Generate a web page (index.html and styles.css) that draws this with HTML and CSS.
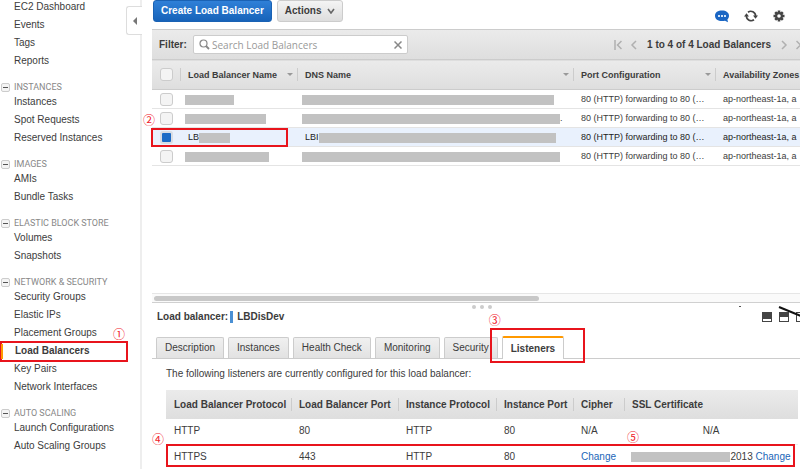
FILE: index.html
```html
<!DOCTYPE html>
<html lang="en">
<head>
    <meta charset="UTF-8">
    <meta name="viewport" content="width=device-width, initial-scale=1.0">
    <title>EC2 Management Console</title>
    <link rel="stylesheet" href="styles.css">
</head>
<body>
    <div class="console">
        <nav class="sidebar">
            <ul>
                <li><a href="#">EC2 Dashboard</a></li>
                <li><a href="#">Events</a></li>
                <li><a href="#">Tags</a></li>
                <li><a href="#">Reports</a></li>
            </ul>
            <h2><button class="fold" aria-label="Collapse"></button>INSTANCES</h2>
            <ul>
                <li><a href="#">Instances</a></li>
                <li><a href="#">Spot Requests</a></li>
                <li><a href="#">Reserved Instances</a></li>
            </ul>
            <h2><button class="fold" aria-label="Collapse"></button>IMAGES</h2>
            <ul>
                <li><a href="#">AMIs</a></li>
                <li><a href="#">Bundle Tasks</a></li>
            </ul>
            <h2><button class="fold" aria-label="Collapse"></button>ELASTIC BLOCK STORE</h2>
            <ul>
                <li><a href="#">Volumes</a></li>
                <li><a href="#">Snapshots</a></li>
            </ul>
            <h2><button class="fold" aria-label="Collapse"></button>NETWORK &amp; SECURITY</h2>
            <ul>
                <li><a href="#">Security Groups</a></li>
                <li><a href="#">Elastic IPs</a></li>
                <li><a href="#">Placement Groups</a></li>
                <li class="current"><a href="#">Load Balancers</a><span class="mark mark-nav"></span><span class="step step-1">①</span></li>
                <li><a href="#">Key Pairs</a></li>
                <li><a href="#">Network Interfaces</a></li>
            </ul>
            <h2><button class="fold" aria-label="Collapse"></button>AUTO SCALING</h2>
            <ul>
                <li><a href="#">Launch Configurations</a></li>
                <li><a href="#">Auto Scaling Groups</a></li>
            </ul>
            <button class="collapse" aria-label="Hide navigation">
                <svg width="4" height="8" viewBox="0 0 4 8"><path d="M4 0v8L0 4z" fill="#777"/></svg>
            </button>
        </nav>

        <main class="main">
            <div class="toolbar">
                <button class="btn btn-primary">Create Load Balancer</button>
                <button class="btn">Actions
                    <svg width="8" height="6" viewBox="0 0 8 6"><path d="M1 1l3 4 3-4" fill="none" stroke="#666" stroke-width="1.6"/></svg>
                </button>
                <div class="tools">
                    <svg width="14" height="14" viewBox="0 0 14 14">
                        <path d="M7 1.500c4 0 7 2 7 5.200 0 1.600-.6 2.800-1.600 3.700l.6 2.800-3-1.400c-.9.2-1.900.3-3 .3-4 0-7-2.100-7-5.400S3 1.500 7 1.500z" fill="#1a66c4"/>
                        <path d="M3 6h2v2H3zM6 6h2v2H6zM9 6h2v2H9z" fill="#cfe2f7"/>
                    </svg>
                    <svg width="14" height="14" viewBox="0 0 14 14">
                        <path d="M4 3.200A4.800 4.800 0 0 1 11.600 7M10 10.800A4.800 4.800 0 0 1 2.400 7" fill="none" stroke="#444" stroke-width="1.700"/>
                        <path d="M9 6.500h5l-2.500 3.200zM0 7.500h5L2.500 4.300z" fill="#444"/>
                    </svg>
                    <svg width="12" height="14" viewBox="0 0 12 14">
                        <g stroke="#444" stroke-width="2.600"><path d="M6 1.500v11M.5 7h11M2.200 3.200l7.600 7.600M9.800 3.200l-7.600 7.600"/></g>
                        <circle cx="6" cy="7" r="3.900" fill="#444"/>
                        <circle cx="6" cy="7" r="1.800" fill="#fff"/>
                    </svg>
                </div>
            </div>

            <div class="filter">
                <label for="search">Filter:</label>
                <div class="search">
                    <svg width="11" height="11" viewBox="0 0 11 11"><circle cx="4.500" cy="4.500" r="3.500" fill="none" stroke="#888" stroke-width="1.200"/><path d="M7 7l3 3" stroke="#888" stroke-width="1.800"/></svg>
                    <input id="search" type="text" placeholder="Search Load Balancers">
                    <button aria-label="Clear"><svg width="8" height="8" viewBox="0 0 8 8"><path d="M.5.5l7 7M7.500.5l-7 7" stroke="#888" stroke-width="1.500"/></svg></button>
                </div>
                <div class="pager">
                    <svg width="8" height="10" viewBox="0 0 8 10"><path d="M1 0v10M7.500 1l-4 4 4 4" /></svg>
                    <svg width="8" height="10" viewBox="0 0 8 10"><path d="M6 1L2 5l4 4"/></svg>
                    <strong>1 to 4 of 4 Load Balancers</strong>
                    <svg width="8" height="10" viewBox="0 0 8 10"><path d="M2 1l4 4-4 4"/></svg>
                    <svg width="8" height="10" viewBox="0 0 8 10"><path d="M.5 1l4 4-4 4M7 0v10"/></svg>
                </div>
            </div>

            <div class="grid-area">
                <table class="grid">
                    <colgroup><col class="c-check"><col class="c-name"><col><col class="c-port"><col class="c-zone"></colgroup>
                    <thead>
                        <tr>
                            <th><input type="checkbox" aria-label="Select all"></th>
                            <th><div class="th">Load Balancer Name <i></i></div></th>
                            <th><div class="th">DNS Name <i></i></div></th>
                            <th><div class="th">Port Configuration <i></i></div></th>
                            <th><div class="th">Availability Zones</div></th>
                        </tr>
                    </thead>
                    <tbody>
                        <tr>
                            <td><input type="checkbox" aria-label="Select row 1"></td>
                            <td class="masked"><span class="mask name-1"></span></td>
                            <td class="masked"><span class="mask dns-1"></span></td>
                            <td>80 (HTTP) forwarding to 80 (…</td>
                            <td>ap-northeast-1a, a</td>
                        </tr>
                        <tr>
                            <td><input type="checkbox" aria-label="Select row 2"></td>
                            <td class="masked"><span class="mask name-2"></span></td>
                            <td class="masked"><span class="mask dns-2"></span>.</td>
                            <td>80 (HTTP) forwarding to 80 (…</td>
                            <td>ap-northeast-1a, a</td>
                        </tr>
                        <tr class="selected">
                            <td><input type="checkbox" aria-label="Select row 3" checked><span class="mark mark-row"></span><span class="step step-2">②</span></td>
                            <td>LB<span class="mask name-3"></span></td>
                            <td>LBI<span class="mask dns-3"></span></td>
                            <td>80 (HTTP) forwarding to 80 (…</td>
                            <td>ap-northeast-1a, a</td>
                        </tr>
                        <tr>
                            <td><input type="checkbox" aria-label="Select row 4"></td>
                            <td class="masked"><span class="mask name-4"></span></td>
                            <td class="masked"><span class="mask dns-4"></span></td>
                            <td>80 (HTTP) forwarding to 80 (…</td>
                            <td>ap-northeast-1a, a</td>
                        </tr>
                    </tbody>
                </table>
            </div>
            <div class="scrollbar"><div class="thumb"></div></div>

            <section class="details">
                <div class="handle"><i></i><i></i><i></i></div>
                <div class="details-head">
                    <strong>Load balancer:</strong><span class="stripe"></span><strong>LBDisDev</strong>
                    <svg class="layouts" width="82" height="18" viewBox="-22 0 82 18">
                        <path d="M-21 0h2v1h-2z" fill="#555"/>
                        <path d="M2 6h10v10H2zM19 6h10v10H19zM36 6h10v10H36z" fill="#444"/>
                        <path d="M3 13h8v2H3zM20 11h8v4h-8zM37 7h8v8h-8z" fill="#fff"/>
                        <path d="M19 1l27 11" stroke="#111" stroke-width="2"/>
                    </svg>
                </div>
                <div class="tabs">
                    <button>Description</button>
                    <button>Instances</button>
                    <button>Health Check</button>
                    <button>Monitoring</button>
                    <button>Security</button>
                    <div class="tab-marked">
                        <button class="active">Listeners</button>
                        <span class="mark mark-tab"></span>
                        <span class="step step-3">③</span>
                    </div>
                </div>
                <div class="panel">
                    <p>The following listeners are currently configured for this load balancer:</p>
                    <div class="listeners-wrap">
                        <table class="listeners">
                            <colgroup><col class="l-proto"><col class="l-port"><col class="l-iproto"><col class="l-iport"><col class="l-cipher"><col></colgroup>
                            <thead>
                                <tr>
                                    <th>Load Balancer Protocol</th>
                                    <th>Load Balancer Port</th>
                                    <th>Instance Protocol</th>
                                    <th>Instance Port</th>
                                    <th>Cipher</th>
                                    <th>SSL Certificate</th>
                                </tr>
                            </thead>
                            <tbody>
                                <tr>
                                    <td>HTTP</td>
                                    <td>80</td>
                                    <td>HTTP</td>
                                    <td>80</td>
                                    <td>N/A</td>
                                    <td>N/A</td>
                                </tr>
                                <tr>
                                    <td>HTTPS</td>
                                    <td>443</td>
                                    <td>HTTP</td>
                                    <td>80</td>
                                    <td><a href="#">Change</a></td>
                                    <td><span class="mask cert"></span>2013 <a href="#">Change</a></td>
                                </tr>
                            </tbody>
                        </table>
                        <span class="mark mark-listener"></span>
                        <span class="step step-4">④</span>
                        <span class="step step-5">⑤</span>
                    </div>
                </div>
            </section>
        </main>
    </div>
</body>
</html>
```
FILE: styles.css
```css
* {
    box-sizing: border-box;
}
body {
    margin: 0;
    font-family: "Liberation Sans", Arial, sans-serif;
    font-size: 10px;
    line-height: 12px;
    color: #3c3c3c;
    background: #fff;
    overflow: hidden;
}
button, input {
    font: inherit;
    color: inherit;
    margin: 0;
}
ul {
    list-style: none;
    margin: 0;
    padding: 0;
}
svg {
    display: block;
    flex: none;
}
.console {
    display: flex;
    min-height: 100vh;
}

/* navigation */
.sidebar {
    position: relative;
    flex: none;
    width: 142px;
    margin-top: -2px;
    border-right: 2px solid #eee;
}
.sidebar li {
    position: relative;
    height: 18px;
    padding-left: 14px;
    line-height: 18px;
}
.sidebar a {
    color: #3c3c3c;
    text-decoration: none;
}
.sidebar h2 {
    display: flex;
    align-items: center;
    gap: 4px;
    height: 12px;
    margin: 11px 0 0;
    padding-left: 1px;
    font-family: Roboto, sans-serif;
    font-size: 9px;
    font-weight: normal;
    color: #888;
}
.fold {
    display: flex;
    align-items: center;
    justify-content: center;
    width: 9px;
    height: 9px;
    padding: 0;
    border: 1px solid #ccc;
    border-radius: 2px;
    background: #f4f4f4;
}
.fold::before {
    content: "";
    width: 5px;
    height: 1px;
    background: #555;
}
.sidebar .current {
    padding-left: 15px;
    font-weight: bold;
}
.current::before {
    content: "";
    position: absolute;
    left: 1px;
    top: 2px;
    width: 2px;
    height: 15px;
    background: #f90;
    z-index: 2;
}
.collapse {
    position: absolute;
    top: 8px;
    right: -2px;
    display: flex;
    align-items: center;
    justify-content: center;
    width: 16px;
    height: 29px;
    padding: 0;
    border: 1px solid #ddd;
    border-right: 0;
    border-radius: 3px 0 0 3px;
    background: #fff;
}

/* toolbar */
.main {
    flex: 1;
    display: flex;
    flex-direction: column;
    min-width: 0;
    margin-right: -20px;
    padding-left: 10px;
}
.toolbar {
    display: flex;
    gap: 5px;
    height: 29px;
    padding: 0 35px 0 1px;
}
.btn {
    display: flex;
    align-items: center;
    gap: 5px;
    height: 22px;
    padding: 0 7px;
    border: 1px solid #ccc;
    border-radius: 3px;
    background: linear-gradient(#f4f4f4, #ddd);
    font-weight: bold;
}
.btn-primary {
    border-color: #1a62b4;
    background: linear-gradient(#2f80d8, #1763b9);
    color: #fff;
}
.tools {
    display: flex;
    gap: 15px;
    margin-left: auto;
    padding-top: 9px;
}
.filter {
    display: flex;
    align-items: center;
    height: 30px;
    padding: 0 16px 0 7px;
    border-top: 1px solid #ccc;
    background: linear-gradient(#ebebeb, #dedede);
}
.filter label {
    width: 34px;
    font-weight: bold;
}
.search {
    display: flex;
    align-items: center;
    width: 215px;
    height: 19px;
    padding: 0 5px;
    border: 1px solid #ccc;
    border-radius: 2px;
    background: #fff;
}
.search input {
    flex: 1;
    min-width: 0;
    padding: 0 0 0 2px;
    border: 0;
    outline: 0;
    background: none;
    font-family: "Open Sans", sans-serif;
}
.search input::placeholder {
    color: #999;
    opacity: 1;
}
.search button {
    padding: 0;
    border: 0;
    background: none;
}
.pager {
    display: flex;
    align-items: center;
    gap: 8px;
    margin-left: auto;
    white-space: nowrap;
}
.pager strong {
    margin: 0 1px;
}
.pager path {
    fill: none;
    stroke: #b0b0b0;
    stroke-width: 1.5;
}

/* load balancer grid */
.grid-area {
    flex: 1;
}
table {
    width: 100%;
    table-layout: fixed;
    border-collapse: collapse;
}
th, td {
    padding: 0 0 0 8px;
    text-align: left;
    white-space: nowrap;
}
th {
    position: relative;
}
th + th::before {
    content: "";
    position: absolute;
    left: 0;
    top: 8px;
    bottom: 8px;
    width: 1px;
    background: #ccc;
}
.c-check {
    width: 28px;
}
.c-name {
    width: 117px;
}
.c-port {
    width: 142px;
}
.c-zone {
    width: 105px;
}
.grid thead tr {
    height: 30px;
    border-top: 1px solid #ccc;
    border-bottom: 1px solid #ccc;
    background: linear-gradient(#ebebeb, #dedede);
    font-size: 9px;
}
.th {
    display: flex;
    align-items: center;
    justify-content: space-between;
    padding-right: 4px;
}
.th i {
    border: 3px solid transparent;
    border-top-color: #999;
    border-bottom: 0;
}
.grid td {
    position: relative;
    height: 19px;
    border-bottom: 1px solid #e4e4e4;
    font-size: 9px;
}
.grid .selected td {
    background: #e9f1fd;
    color: #222;
}
.grid .masked {
    padding-left: 5px;
}
input[type="checkbox"] {
    appearance: none;
    display: block;
    width: 13px;
    height: 13px;
    border: 1px solid #ccc;
    border-radius: 3px;
    background: #f4f4f4;
}
input[type="checkbox"]:checked {
    border: 2px solid #d8dde4;
    background: #1c6bc6;
}
.mask {
    display: inline-block;
    height: 10px;
    background: #c2c2c2;
    vertical-align: middle;
}
.name-1 { width: 49px; }
.name-2 { width: 81px; }
.name-3 { width: 31px; }
.name-4 { width: 84px; }
.dns-1 { width: 252px; }
.dns-2 { width: 258px; }
.dns-3 { width: 237px; }
.dns-4 { width: 258px; }
.cert { width: 99px; }
.scrollbar {
    height: 10px;
    padding: 2px;
    border-top: 1px solid #e6e6e6;
    border-bottom: 1px solid #d0d0d0;
    background: #fafafa;
}
.thumb {
    width: 58%;
    height: 5px;
    border-radius: 3px;
    background: #c8c8c8;
}

/* details */
.details {
    margin-right: 20px;
}
.handle {
    display: flex;
    justify-content: center;
    gap: 4px;
    height: 8px;
    padding: 2px 0 0 12px;
}
.handle i {
    width: 4px;
    height: 4px;
    border-radius: 2px;
    background: #ccc;
}
.details-head {
    position: relative;
    display: flex;
    align-items: center;
    height: 12px;
    padding-left: 5px;
}
.stripe {
    width: 3px;
    height: 12px;
    margin: 0 4px 0 2px;
    background: #4a90d4;
}
.layouts {
    position: absolute;
    right: -20px;
    top: -5px;
}
.tabs {
    display: flex;
    align-items: flex-end;
    gap: 4px;
    height: 22px;
    margin-top: 14px;
    padding-left: 4px;
    border-bottom: 1px solid #ccc;
}
.tabs button {
    height: 21px;
    padding: 0 8px;
    border: 1px solid #ccc;
    border-bottom: 0;
    border-radius: 2px 2px 0 0;
    background: linear-gradient(#f0f0f0, #e2e2e2);
}
.tab-marked {
    position: relative;
    margin-bottom: -1px;
}
.tabs .active {
    display: block;
    height: 23px;
    border-top: 2px solid #f90;
    background: #fff;
    font-weight: bold;
}
.panel {
    padding: 7px 2px 0 14px;
}
.panel p {
    margin: 0 0 9px;
    line-height: 15px;
}
.listeners-wrap {
    position: relative;
}
.l-proto {
    width: 125px;
}
.l-port {
    width: 107px;
}
.l-iproto {
    width: 98px;
}
.l-iport {
    width: 77px;
}
.l-cipher {
    width: 51px;
}
.listeners th {
    height: 29px;
    background: linear-gradient(#ebebeb, #dedede);
}
.listeners td {
    height: 25px;
    border-bottom: 1px solid #eee;
}
.listeners tbody tr:last-child td {
    border-bottom: 0;
}
.listeners td:last-child {
    padding: 0;
    text-align: center;
}
.listeners a {
    color: #1a66b8;
    text-decoration: none;
}

/* walkthrough marks */
.mark {
    position: absolute;
    border: 2px solid #e8141c;
    pointer-events: none;
    z-index: 1;
}
.step {
    position: absolute;
    font-family: "Noto Sans CJK JP", sans-serif;
    font-size: 12px;
    font-weight: normal;
    line-height: 12px;
    color: #f0202a;
    z-index: 1;
}
.mark-nav {
    left: 0;
    top: -1px;
    width: 128px;
    height: 21px;
}
.step-1 {
    left: 113px;
    top: -14px;
}
.mark-row {
    left: -1px;
    top: 0;
    width: 137px;
    height: 19px;
}
.step-2 {
    left: -9px;
    top: -14px;
}
.mark-tab {
    left: -12px;
    top: -8px;
    width: 95px;
    height: 35px;
}
.step-3 {
    left: -13px;
    top: -22px;
}
.mark-listener {
    left: 0;
    right: 3px;
    bottom: 2px;
    height: 23px;
}
.step-4 {
    left: -14px;
    top: 43px;
}
.step-5 {
    left: 461px;
    top: 41px;
}
```
